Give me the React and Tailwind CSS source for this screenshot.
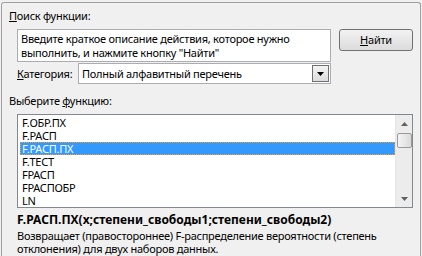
import { useState } from "react";

const FUNCS = ["F.ОБР.ПХ", "F.РАСП", "F.РАСП.ПХ", "F.ТЕСТ", "FРАСП", "FРАСПОБР", "LN"];

const font = { fontFamily: '"Noto Sans", "Liberation Sans", sans-serif' };

function Arrow({ down = true, className = "" }) {
  return (
    <svg width="7" height="4" viewBox="0 0 7 4" className={className}>
      {down ? <path d="M0 0h7L3.5 4z" fill="currentColor" /> : <path d="M0 4h7L3.5 0z" fill="currentColor" />}
    </svg>
  );
}

export default function App() {
  const [selected, setSelected] = useState("F.РАСП.ПХ");

  return (
    <div className="w-[422px] h-[256px] overflow-hidden bg-[#f0f0f0] pt-[2px] pl-[1px] text-[11px] tracking-[-0.25px] text-black" style={font}>
      <div className="w-[420px] h-[300px] border-l border-t border-r border-[#a0a0a0] rounded-t-[3px] pt-[5px] pl-[7px]">
        <div className="leading-[15px]"><span className="underline">П</span>оиск функции:</div>

        <div className="flex items-start mt-[6px] ml-[8px]">
          <div className="w-[314px] h-[33px] bg-white border border-[#abadb3] pl-[3px] pt-[2px] leading-[14px]">
            Введите краткое описание действия, которое нужно<br />выполнить, и нажмите кнопку "Найти"
          </div>
          <button className="ml-[8px] w-[74px] h-[22px] rounded-[3px] border border-[#707070] bg-gradient-to-b from-[#f2f2f2] to-[#dcdcdc] leading-[14px]">
            <span className="underline">Н</span>айти
          </button>
        </div>

        <div className="w-[314px] flex items-center justify-between mt-[1px] ml-[8px]">
          <span className="leading-[15px]"><span className="underline">К</span>атегория:</span>
          <div className="w-[253px] h-[21px] bg-white border border-[#abadb3] flex items-center pl-[3px]">
            <span className="flex-1 leading-[14px]">Полный алфавитный перечень</span>
            <div className="w-[17px] h-[17px] mr-[1px] border border-[#707070] bg-gradient-to-b from-[#f2f2f2] to-[#dcdcdc] flex items-center justify-center">
              <Arrow />
            </div>
          </div>
        </div>

        <div className="mt-[9px] leading-[15px]">Выберите <span className="underline">ф</span>ункцию:</div>

        <div className="mt-[6px] ml-[8px] w-[396px] h-[94px] bg-white border border-[#828790] flex">
          <div className="flex-1 pt-[1px] pl-[2px]">
            {FUNCS.map((f) => (
              <div
                key={f}
                onClick={() => setSelected(f)}
                className={
                  f === selected
                    ? "h-[13px] leading-[12px] pl-[1px] bg-[#3399ff] text-white border border-dotted border-[#ff9a1f]"
                    : "h-[13px] leading-[13px] pl-[2px]"
                }
              >
                {f}
              </div>
            ))}
          </div>
          <div className="w-[17px] bg-[#ececec] border-l border-[#e6e6e6] flex flex-col items-center text-[#606060]">
            <div className="h-[18px] flex items-center justify-center"><Arrow down={false} /></div>
            <div className="w-[15px] h-[15px] rounded-[2px] border border-[#9a9a9a] bg-gradient-to-r from-[#f4f4f4] to-[#dadada]" />
            <div className="flex-1" />
            <div className="h-[17px] flex items-center justify-center"><Arrow /></div>
          </div>
        </div>

        <div className="mt-[4px] ml-[8px] text-[12px] tracking-normal font-bold leading-[15px]">F.РАСП.ПХ(x;степени_свободы1;степени_свободы2)</div>
        <div className="mt-[2px] ml-[8px] leading-[13px]">
          Возвращает (правостороннее) F-распределение вероятности (степень<br />отклонения) для двух наборов данных.
        </div>
      </div>
    </div>
  );
}
